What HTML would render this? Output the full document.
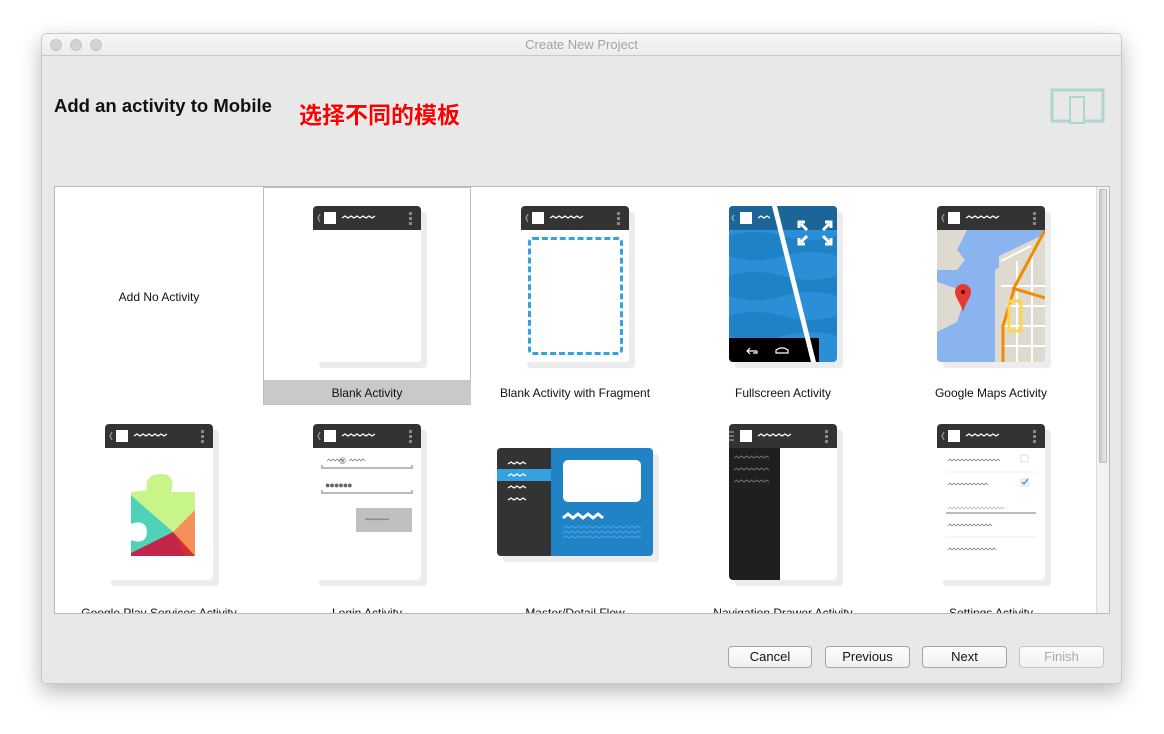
<!DOCTYPE html>
<html><head><meta charset="utf-8">
<style>
*{margin:0;padding:0;box-sizing:border-box}
body{width:1164px;height:734px;background:#fff;font-family:"Liberation Sans","Noto Sans CJK SC",sans-serif;position:relative;overflow:hidden}
.win{position:absolute;left:41px;top:33px;width:1081px;height:651px;background:#e8e8e8;border:1px solid #c8c8c8;border-radius:5px;box-shadow:0 8px 22px rgba(0,0,0,.28);overflow:hidden}
.tb{position:absolute;left:0;top:0;width:100%;height:22px;background:linear-gradient(#f6f6f6,#ececec);border-bottom:1px solid #c9c9c9;text-align:center;font-size:13px;color:#a3a3a3;line-height:22px}
.dot{position:absolute;top:5px;width:12px;height:12px;border-radius:50%;background:#d3d3d3;border:1px solid #c6c6c6}
.a{position:absolute}
.panel{position:absolute;left:54px;top:186px;width:1056px;height:428px;background:#fff;border:1px solid #b9b9b9;overflow:hidden}
.lbl{position:absolute;width:208px;text-align:center;font-size:12px;color:#111}
.ph{position:absolute;width:108px;height:156px;background:#fff;border-radius:4px}
.sh{position:absolute;width:108px;height:156px;background:#ececec;border-radius:4px}
.hd{position:absolute;left:0;top:0;width:108px;height:24px;background:#333;border-radius:4px 4px 0 0}
.btn{position:absolute;top:646px;height:22px;border:1px solid #a5a5a5;border-radius:4px;background:linear-gradient(#fdfdfd,#f0f0f0);font-size:13px;text-align:center;line-height:20px;color:#111}
</style></head><body>
<div class="win">
<div class="tb">Create New Project</div>
<div class="dot" style="left:8px"></div><div class="dot" style="left:28px"></div><div class="dot" style="left:48px"></div>
</div>
<div class="a" style="left:54px;top:95px;font-size:18.5px;font-weight:bold;color:#111">Add an activity to Mobile</div>
<div class="a" style="left:299px;top:99px;font-size:23px;font-weight:bold;color:#f00;font-family:'Noto Sans CJK SC',sans-serif;text-shadow:0 0 2px #fff,0 0 2px #fff;line-height:28px">选择不同的模板</div>
<svg class="a" style="left:1050px;top:88px" width="56" height="36"><rect x="2" y="2" width="51" height="31" fill="none" stroke="#acd6d2" stroke-width="3"/><rect x="20" y="9" width="14" height="26" fill="#e8e8e8" stroke="#acd6d2" stroke-width="2"/></svg>

<div class="panel">
<div class="a" style="left:1041px;top:0;width:14px;height:428px;background:#f2f2f2;border-left:1px solid #ddd"></div>
<div class="a" style="left:1044px;top:2px;width:8px;height:274px;background:linear-gradient(90deg,#c9c9c9,#e9e9e9);border:1px solid #bbb;border-radius:2px"></div>
<div class="a" style="left:208px;top:0;width:208px;height:218px;border:1px solid #c0c0c0"></div>
<div class="a" style="left:209px;top:193px;width:207px;height:24px;background:#c9c9c9"></div>
</div>

<div class="lbl" style="left:55px;top:290px">Add No Activity</div>
<div class="lbl" style="left:263px;top:386px">Blank Activity</div>
<div class="lbl" style="left:471px;top:386px">Blank Activity with Fragment</div>
<div class="lbl" style="left:679px;top:386px">Fullscreen Activity</div>
<div class="lbl" style="left:887px;top:386px">Google Maps Activity</div>
<div class="a" style="left:55px;top:600px;width:1040px;height:13px;overflow:hidden">
<div class="lbl" style="left:0;top:6px">Google Play Services Activity</div>
<div class="lbl" style="left:208px;top:6px">Login Activity</div>
<div class="lbl" style="left:416px;top:6px">Master/Detail Flow</div>
<div class="lbl" style="left:624px;top:6px">Navigation Drawer Activity</div>
<div class="lbl" style="left:832px;top:6px">Settings Activity</div>
</div>

<svg width="0" height="0" style="position:absolute"><defs>
<g id="hdr"><path d="M7 8 L5 12 L7 16" stroke="#888" stroke-width="1.5" fill="none"/><rect x="11" y="6" width="12" height="12" fill="#fff"/><path d="M29 12 l3-2 3 2 3-2 3 2 3-2 3 2 3-2 3 2 3-2 3 2 3-2" stroke="#fff" stroke-width="1.3" fill="none"/><rect x="96" y="6" width="3" height="3" fill="#888"/><rect x="96" y="11" width="3" height="3" fill="#888"/><rect x="96" y="16" width="3" height="3" fill="#888"/></g>
</defs></svg>

<!-- Blank Activity -->
<div class="sh" style="left:319px;top:212px"></div><div class="ph" style="left:313px;top:206px"><div class="hd"></div><svg class="a" style="left:0;top:0" width="108" height="24"><use href="#hdr"/></svg></div>
<!-- Fragment -->
<div class="sh" style="left:527px;top:212px"></div><div class="ph" style="left:521px;top:206px"><div class="hd"></div><svg class="a" style="left:0;top:0" width="108" height="24"><use href="#hdr"/></svg>
<div class="a" style="left:7px;top:31px;width:95px;height:118px;border:3px dashed #35a2e0;border-radius:5px"></div></div>
<!-- Fullscreen -->
<div class="sh" style="left:735px;top:212px"></div>
<svg class="a" style="left:729px;top:206px" width="108" height="156"><defs><clipPath id="c1"><rect width="108" height="156" rx="4"/></clipPath></defs><g clip-path="url(#c1)">
<rect width="108" height="156" fill="#2a8fd6"/>
<path d="M0 0h108v24H0z" fill="#1d6fa8"/>
<path d="M0 30 q27-8 54 0 t54 0 v20 q-27-8-54 0 t-54 0z" fill="#1f82c6"/>
<path d="M0 70 q27-8 54 0 t54 0 v20 q-27-8-54 0 t-54 0z" fill="#1f82c6"/>
<path d="M0 110 q27-8 54 0 t54 0 v20 q-27-8-54 0 t-54 0z" fill="#1f82c6"/>
<path d="M0 0h108v24H0z" fill="#1a5f8e" opacity=".6"/>
<rect x="0" y="132" width="90" height="24" fill="#000"/>
<path d="M43 0 L82 156 L87 156 L48 0z" fill="#fff"/>
<rect x="11" y="6" width="12" height="12" fill="#fff"/><path d="M5 9 L3 12 L5 15" stroke="#8ab" stroke-width="1.5" fill="none"/><path d="M29 12 l3-2 3 2 3-2 3 2" stroke="#fff" stroke-width="1.3" fill="none"/>
<g stroke="#fff" stroke-width="3" fill="none"><path d="M70 22v-6h6M96 16h6v6M70 32v6h6M96 38h6v-6M72 18l6 6M100 18l-6 6M72 36l6-6M100 36l-6-6"/></g>
<path d="M18 145h10M21 142l-3 3 3 3M28 145v2h-4" stroke="#fff" stroke-width="1.2" fill="none"/>
<path d="M47 147v-3l4-2h4l4 2v3z" stroke="#fff" stroke-width="1.2" fill="none"/>
</g></svg>
<!-- Maps -->
<div class="sh" style="left:943px;top:212px"></div>
<svg class="a" style="left:937px;top:206px" width="108" height="156"><defs><clipPath id="c2"><rect width="108" height="156" rx="4"/></clipPath></defs><g clip-path="url(#c2)">
<rect width="108" height="156" fill="#dedad0"/>
<path d="M0 24h108v20l-20 0-30 20 0 92H0v-30l20-10 10-30-30-10z" fill="#8ab4f0"/>
<path d="M0 24h30l-10 20 8 10-8 10H0z" fill="#dedad0"/>
<path d="M62 50l25-12 21-10v128H62z" fill="#dedad0"/>
<g stroke="#fff" stroke-width="2" fill="none"><path d="M64 55l30-15M64 80h44M70 100h38M66 120h42M64 140h44M80 55v101M95 45v111"/></g>
<path d="M108 24 L78 80 L66 120 L66 156" stroke="#f08c00" stroke-width="3" fill="none"/><path d="M75 82 L108 92" stroke="#f08c00" stroke-width="3"/>
<path d="M72 95 v30 h12 v-30z" stroke="#ffd54f" stroke-width="3" fill="none"/>
<path d="M18 86a8 8 0 0 1 16 0c0 6-8 14-8 22c0-8-8-16-8-22z" fill="#e53935"/><circle cx="26" cy="86" r="2" fill="#500"/>
<rect width="108" height="24" fill="#333"/><use href="#hdr"/>
</g></svg>

<!-- Play services -->
<div class="sh" style="left:111px;top:430px"></div><div class="ph" style="left:105px;top:424px"><div class="hd"></div><svg class="a" style="left:0;top:0" width="108" height="24"><use href="#hdr"/></svg>
<svg class="a" style="left:20px;top:46px" width="70" height="86"><defs><clipPath id="pz"><path d="M22 20c-2-12 4-16 14-16s14 6 10 18h24v64H6V70c10 4 16 0 16-8s-6-12-16-8V22z"/></clipPath></defs><g clip-path="url(#pz)"><rect width="70" height="86" fill="#c8f58a"/><path d="M0 20 L48 62 L0 86z" fill="#4fd3b8"/><path d="M0 86 L48 62 L70 86z" fill="#c2244a"/><path d="M48 62 L70 40 L70 86z" fill="#f5905a"/><path d="M48 62 L70 86 L60 86z" fill="#d23030"/></g></svg></div>
<!-- Login -->
<div class="sh" style="left:319px;top:430px"></div><div class="ph" style="left:313px;top:424px"><div class="hd"></div><svg class="a" style="left:0;top:0" width="108" height="108"><use href="#hdr"/>
<path d="M14 37l2-2 2 2 2-2 2 2 2-2 2 2 2-2 2 2M36 37l2-2 2 2 2-2 2 2 2-2 2 2 2-2 2 2" stroke="#888" stroke-width=".8" fill="none"/><text x="26" y="39" font-size="7" fill="#666" font-family="Liberation Sans">@</text>
<path d="M9 41v3h90v-3" stroke="#bbb" stroke-width="2" fill="none"/>
<text x="12" y="64" font-size="9" fill="#666" font-family="Liberation Sans" letter-spacing="-1">●●●●●●</text>
<path d="M9 66v3h90v-3" stroke="#bbb" stroke-width="2" fill="none"/>
<rect x="43" y="84" width="56" height="24" fill="#c0c0c0"/><path d="M52 96l2-1.5 2 1.5 2-1.5 2 1.5 2-1.5 2 1.5 2-1.5 2 1.5 2-1.5 2 1.5 2-1.5 2 1.5" stroke="#777" stroke-width=".8" fill="none"/></svg></div>
<!-- Master detail -->
<div class="sh" style="left:503px;top:454px;width:156px;height:108px"></div>
<svg class="a" style="left:497px;top:448px" width="156" height="108"><defs><clipPath id="c3"><rect width="156" height="108" rx="4"/></clipPath></defs><g clip-path="url(#c3)">
<rect width="156" height="108" fill="#2083c6"/><rect width="54" height="108" fill="#333"/><rect y="21" width="54" height="12" fill="#35a2e0"/>
<g stroke="#fff" stroke-width="1.3" fill="none"><path d="M11 16l3-2 3 2 3-2 3 2 3-2 3 2"/><path d="M11 28l3-2 3 2 3-2 3 2 3-2 3 2"/><path d="M11 40l3-2 3 2 3-2 3 2 3-2 3 2"/><path d="M11 52l3-2 3 2 3-2 3 2 3-2 3 2"/></g>
<rect x="66" y="12" width="78" height="42" rx="5" fill="#fff"/>
<path d="M66 70l5-4 5 4 5-4 5 4 5-4 5 4 5-4 5 4" stroke="#fff" stroke-width="3" fill="none"/>
<g stroke="#4aa8e6" stroke-width="1" fill="none"><path d="M66 80l3-2 3 2 3-2 3 2 3-2 3 2 3-2 3 2 3-2 3 2 3-2 3 2 3-2 3 2 3-2 3 2 3-2 3 2 3-2 3 2 3-2 3 2 3-2 3 2 3-2 3 2"/><path d="M66 85l3-2 3 2 3-2 3 2 3-2 3 2 3-2 3 2 3-2 3 2 3-2 3 2 3-2 3 2 3-2 3 2 3-2 3 2 3-2 3 2 3-2 3 2 3-2 3 2 3-2 3 2"/><path d="M66 90l3-2 3 2 3-2 3 2 3-2 3 2 3-2 3 2 3-2 3 2 3-2 3 2 3-2 3 2 3-2 3 2 3-2 3 2 3-2 3 2 3-2 3 2 3-2 3 2 3-2 3 2"/></g>
</g></svg>
<!-- Nav drawer -->
<div class="sh" style="left:735px;top:430px"></div>
<svg class="a" style="left:729px;top:424px" width="108" height="156"><defs><clipPath id="c4"><rect width="108" height="156" rx="4"/></clipPath></defs><g clip-path="url(#c4)">
<rect width="108" height="156" fill="#fff"/><rect y="24" width="51" height="132" fill="#1f1f1f"/><rect width="108" height="24" fill="#333"/><use href="#hdr"/>
<rect x="0" y="6" width="10" height="12" fill="#333"/><path d="M0 8h5M0 12h5M0 16h5" stroke="#888" stroke-width="1.5"/>
<g stroke="#777" stroke-width=".9" fill="none"><path d="M5 34l2.5-2 2.5 2 2.5-2 2.5 2 2.5-2 2.5 2 2.5-2 2.5 2 2.5-2 2.5 2 2.5-2 2.5 2 2.5-2 2.5 2"/><path d="M5 46l2.5-2 2.5 2 2.5-2 2.5 2 2.5-2 2.5 2 2.5-2 2.5 2 2.5-2 2.5 2 2.5-2 2.5 2 2.5-2 2.5 2"/><path d="M5 58l2.5-2 2.5 2 2.5-2 2.5 2 2.5-2 2.5 2 2.5-2 2.5 2 2.5-2 2.5 2 2.5-2 2.5 2 2.5-2 2.5 2"/></g>
</g></svg>
<!-- Settings -->
<div class="sh" style="left:943px;top:430px"></div><div class="ph" style="left:937px;top:424px"><div class="hd"></div><svg class="a" style="left:0;top:0" width="108" height="156"><use href="#hdr"/>
<g stroke="#888" stroke-width=".8" fill="none"><path d="M11 37l2-2 2 2 2-2 2 2 2-2 2 2 2-2 2 2 2-2 2 2 2-2 2 2 2-2 2 2 2-2 2 2 2-2 2 2 2-2 2 2 2-2 2 2 2-2 2 2 2-2 2 2"/><path d="M11 61l2-2 2 2 2-2 2 2 2-2 2 2 2-2 2 2 2-2 2 2 2-2 2 2 2-2 2 2 2-2 2 2 2-2 2 2 2-2 2 2"/><path d="M11 102l2-2 2 2 2-2 2 2 2-2 2 2 2-2 2 2 2-2 2 2 2-2 2 2 2-2 2 2 2-2 2 2 2-2 2 2 2-2 2 2 2-2 2 2"/><path d="M11 126l2-2 2 2 2-2 2 2 2-2 2 2 2-2 2 2 2-2 2 2 2-2 2 2 2-2 2 2 2-2 2 2 2-2 2 2 2-2 2 2 2-2 2 2 2-2 2 2"/></g>
<path d="M11 85l2-2 2 2 2-2 2 2 2-2 2 2 2-2 2 2 2-2 2 2 2-2 2 2 2-2 2 2 2-2 2 2 2-2 2 2 2-2 2 2 2-2 2 2 2-2 2 2 2-2 2 2 2-2 2 2" stroke="#bbb" stroke-width=".8" fill="none"/>
<path d="M9 48h90M9 113h90" stroke="#eee" stroke-width="1"/><path d="M9 89h90" stroke="#bbb" stroke-width="2"/>
<rect x="84" y="31" width="7" height="7" fill="none" stroke="#ddd"/><rect x="84" y="55" width="7" height="7" fill="none" stroke="#ddd"/><path d="M85 58l2 2 4-5" stroke="#35a2e0" stroke-width="1.5" fill="none"/></svg></div>

<div class="btn" style="left:728px;width:84px">Cancel</div>
<div class="btn" style="left:825px;width:85px">Previous</div>
<div class="btn" style="left:922px;width:85px">Next</div>
<div class="btn" style="left:1019px;width:85px;color:#aaa;border-color:#c4c4c4">Finish</div>
</body></html>
